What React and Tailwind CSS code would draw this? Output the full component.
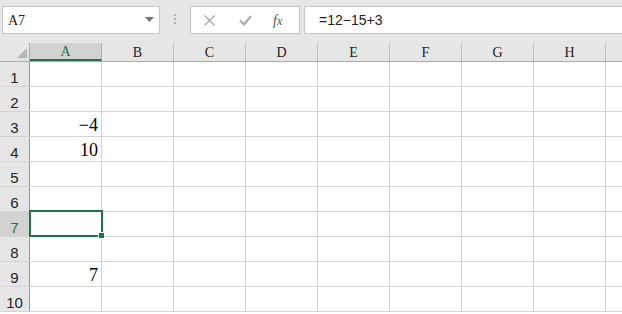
import React from "react";

const COLS = ["A", "B", "C", "D", "E", "F", "G", "H", ""];
const ROWS = [1, 2, 3, 4, 5, 6, 7, 8, 9, 10];
const VALUES = { 3: "−4", 4: "10", 9: "7" };

function Toolbar() {
  return (
    <div className="flex h-[43px] items-start bg-[#e6e6e6] pt-[6px]">
      {/* name box */}
      <div className="ml-[2px] flex h-[28px] w-[158px] items-center justify-between border border-[#c6c6c6] bg-white pl-[5px] pr-[5px]">
        <span className="font-['Liberation_Serif',serif] text-[14px] text-[#222]">A7</span>
        <svg width="9" height="6" viewBox="0 0 9 6">
          <path d="M0 0 H9 L4.5 5 Z" fill="#777" />
        </svg>
      </div>
      {/* grip */}
      <div className="ml-[14px] mt-[8px] flex w-[3px] flex-col gap-[2px]">
        <span className="h-[2px] w-[2px] bg-[#b0b0b0]" />
        <span className="h-[2px] w-[2px] bg-[#b0b0b0]" />
        <span className="h-[2px] w-[2px] bg-[#b0b0b0]" />
      </div>
      {/* buttons */}
      <div className="ml-[13px] flex h-[28px] w-[110px] items-center border border-[#c6c6c6] bg-white">
        <svg className="ml-[13px]" width="11" height="11" viewBox="0 0 11 11">
          <path d="M0.5 0.5 L10.5 10.5 M10.5 0.5 L0.5 10.5" stroke="#a8a8a8" strokeWidth="1.3" />
        </svg>
        <svg className="ml-[24px]" width="13" height="11" viewBox="0 0 13 11">
          <path d="M1 5.5 L5 9.5 L12 1" stroke="#a8a8a8" strokeWidth="2" fill="none" />
        </svg>
        <span className="ml-[21px] font-['Liberation_Serif',serif] text-[14px] italic text-[#555]">
          f<span className="text-[12px]">x</span>
        </span>
      </div>
      {/* formula */}
      <div className="ml-[4px] flex h-[28px] flex-1 items-center border border-r-0 border-[#c6c6c6] bg-white pl-[14px]">
        <span className="font-['Liberation_Sans',sans-serif] text-[14px] text-[#222]">=12−15+3</span>
      </div>
    </div>
  );
}

function Header() {
  return (
    <div className="flex h-[19px] border-b border-[#ababab] bg-[#e6e6e6]">
      <div className="relative w-[30px] shrink-0 border-r border-[#ababab]">
        <svg className="absolute left-[17px] top-[5px]" width="10" height="10" viewBox="0 0 10 10">
          <path d="M10 0 V10 H0 Z" fill="#b7b7b7" />
        </svg>
      </div>
      {COLS.map((c, i) => (
        <div
          key={i}
          className={`flex w-[72px] shrink-0 items-center justify-center border-r font-['Liberation_Serif',serif] text-[14px] ${
            c === "A"
              ? "border-[#ababab] border-b-2 border-b-[#217346] bg-[#d2d2d2] text-[#217346]"
              : "border-[#c0c0c0] text-[#222]"
          }`}
        >
          {c}
        </div>
      ))}
    </div>
  );
}

function Row({ n }) {
  const sel = n === 7;
  return (
    <div className="flex h-[25px] border-b border-[#d4d4d4]">
      <div
        className={`flex w-[30px] shrink-0 items-end justify-center border-r border-[#9b9b9b] pb-[1px] font-['Liberation_Sans',sans-serif] text-[15px] leading-none ${
          sel ? "bg-[#d2d2d2] text-[#217346]" : "bg-[#e6e6e6] text-[#222]"
        }`}
      >
        {n}
      </div>
      {COLS.map((c, i) => (
        <div key={i} className="relative flex w-[72px] shrink-0 items-end justify-end border-r border-[#d4d4d4] pr-[3px]">
          {c === "A" && VALUES[n] && (
            <span className="font-['Liberation_Serif',serif] text-[18px] leading-[22px] text-black">{VALUES[n]}</span>
          )}
          {c === "A" && sel && (
            <div className="absolute -left-[1px] -top-[2px] z-10 h-[27px] w-[74px] border-2 border-[#217346]">
              <div className="absolute -bottom-[4px] -right-[4px] h-[7px] w-[7px] border border-white bg-[#217346]" />
            </div>
          )}
        </div>
      ))}
    </div>
  );
}

export default function App() {
  return (
    <div className="h-[314px] w-[622px] overflow-hidden bg-white">
      <Toolbar />
      <Header />
      {ROWS.map((n) => (
        <Row key={n} n={n} />
      ))}
    </div>
  );
}
